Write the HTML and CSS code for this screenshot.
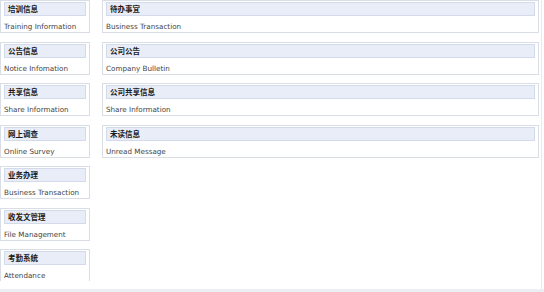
FILE: index.html
```html
<!DOCTYPE html>
<html lang="zh">
<head>
    <meta charset="UTF-8">
    <title>信息门户</title>
    <link rel="stylesheet" href="styles.css">
</head>
<body>
    <div class="portal">
        <div class="col col-left">
            <div class="box"><div class="box-title">培训信息</div><div class="box-text">Training Information</div></div>
            <div class="box"><div class="box-title">公告信息</div><div class="box-text">Notice Infomation</div></div>
            <div class="box"><div class="box-title">共享信息</div><div class="box-text">Share Information</div></div>
            <div class="box"><div class="box-title">网上调查</div><div class="box-text">Online Survey</div></div>
            <div class="box"><div class="box-title">业务办理</div><div class="box-text">Business Transaction</div></div>
            <div class="box"><div class="box-title">收发文管理</div><div class="box-text">File Management</div></div>
            <div class="box"><div class="box-title">考勤系统</div><div class="box-text">Attendance</div></div>
        </div>
        <div class="col col-right">
            <div class="box"><div class="box-title">待办事宜</div><div class="box-text">Business Transaction</div></div>
            <div class="box"><div class="box-title">公司公告</div><div class="box-text">Company Bulletin</div></div>
            <div class="box"><div class="box-title">公司共享信息</div><div class="box-text">Share Information</div></div>
            <div class="box"><div class="box-title">未读信息</div><div class="box-text">Unread Message</div></div>
        </div>
    </div>
    <div class="bottom-line"></div>
</body>
</html>
```

FILE: styles.css
```css
body {
    margin: 0;
    background: #fff;
    font-family: "DejaVu Sans", Verdana, "Noto Sans CJK SC", sans-serif;
    color: #444;
}
.portal {
    display: flex;
    gap: 12px;
    width: 539px;
    height: 289px;
    padding-right: 2px;
    border-right: 1px solid #e6e9ee;
}
.col {
    display: flex;
    flex-direction: column;
    gap: 8.5px;
}
.col-left {
    width: 90px;
    height: 281px;
    overflow: hidden;
}
.col-right {
    flex: 1;
}
.box {
    flex-shrink: 0;
    box-sizing: border-box;
    height: 33px;
    border: 1px solid #d9dee6;
    padding: 1px 3px 0 3px;
}
.box-title {
    height: 12px;
    line-height: 12px;
    background: #e8edf7;
    border: 1px solid #d3dbea;
    padding-left: 3px;
    font-family: "Noto Sans CJK SC", sans-serif;
    font-size: 7.5px;
    font-weight: bold;
    color: #1a1a1a;
}
.box-text {
    margin-top: 5px;
    font-size: 7.2px;
    line-height: 11px;
    white-space: nowrap;
}
.bottom-line {
    height: 3px;
    background: #eceef2;
}
```
